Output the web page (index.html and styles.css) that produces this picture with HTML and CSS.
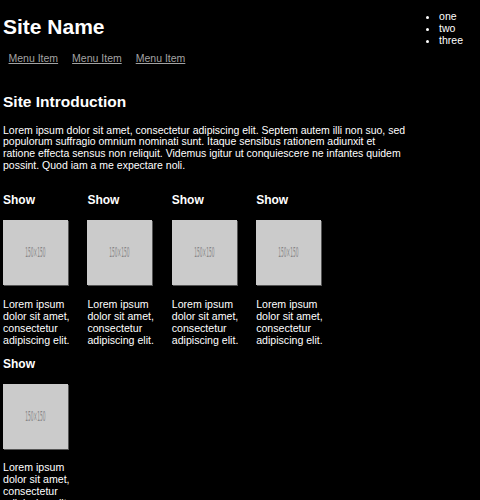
FILE: index.html
```html
<!DOCTYPE html>
<html>
<head>
<meta charset="utf-8">
<link rel="stylesheet" href="styles.css">
</head>
<body>
<header class="header">
  <div class="brand">
    <h1 class="site-name">Site Name</h1>
    <nav class="menu">
      <a href="#" class="menu-item">Menu Item</a>
      <a href="#" class="menu-item">Menu Item</a>
      <a href="#" class="menu-item">Menu Item</a>
    </nav>
  </div>
  <ul class="side-list">
    <li>one</li>
    <li>two</li>
    <li>three</li>
  </ul>
</header>
<main class="main">
  <h2 class="intro-title">Site Introduction</h2>
  <p class="intro-text">Lorem ipsum dolor sit amet, consectetur adipiscing elit. Septem autem illi non suo, sed populorum suffragio omnium nominati sunt. Itaque sensibus rationem adiunxit et ratione effecta sensus non reliquit. Videmus igitur ut conquiescere ne infantes quidem possint. Quod iam a me expectare noli.</p>
  <section class="shows">
    <div class="show">
      <h3 class="show-title">Show</h3>
      <div class="thumb"><span class="thumb-label">150×150</span></div>
      <p class="show-text">Lorem ipsum dolor sit amet, consectetur adipiscing elit.</p>
    </div>
    <div class="show">
      <h3 class="show-title">Show</h3>
      <div class="thumb"><span class="thumb-label">150×150</span></div>
      <p class="show-text">Lorem ipsum dolor sit amet, consectetur adipiscing elit.</p>
    </div>
    <div class="show">
      <h3 class="show-title">Show</h3>
      <div class="thumb"><span class="thumb-label">150×150</span></div>
      <p class="show-text">Lorem ipsum dolor sit amet, consectetur adipiscing elit.</p>
    </div>
    <div class="show">
      <h3 class="show-title">Show</h3>
      <div class="thumb"><span class="thumb-label">150×150</span></div>
      <p class="show-text">Lorem ipsum dolor sit amet, consectetur adipiscing elit.</p>
    </div>
    <div class="show">
      <h3 class="show-title">Show</h3>
      <div class="thumb"><span class="thumb-label">150×150</span></div>
      <p class="show-text">Lorem ipsum dolor sit amet, consectetur adipiscing elit.</p>
    </div>
  </section>
</main>
</body>
</html>
```
FILE: styles.css
```css
html, body {
  background: #000;
}
body {
  margin: 0;
  padding: 0 0 0 3px;
  color: #fff;
  font-family: "Liberation Sans", Arial, sans-serif;
  font-size: 10.5px;
  line-height: 12px;
}
.header {
  display: flex;
  justify-content: space-between;
  align-items: flex-start;
}
.site-name {
  margin: 15px 0 0 0;
  font-size: 21px;
  line-height: 23.5px;
  font-weight: bold;
}
.menu {
  display: flex;
  gap: 14px;
  margin: 14px 0 0 5.5px;
  line-height: 11.7px;
}
.menu-item {
  color: #a3a3a3;
  text-decoration: underline;
}
.side-list {
  margin: 10.4px 17px 0 0;
  padding: 0 0 0 11px;
  list-style: disc;
}
.main {
  display: block;
}
.intro-title {
  margin: 28.5px 0 0 0;
  font-size: 15.5px;
  line-height: 17.3px;
  font-weight: bold;
}
.intro-text {
  margin: 14.5px 0 0 0;
  max-width: 407px;
  line-height: 11.7px;
}
.shows {
  display: grid;
  grid-template-columns: repeat(4, 84.4px);
  row-gap: 12px;
  margin-top: 22.7px;
}
.show-title {
  margin: 0;
  font-size: 12px;
  line-height: 13.4px;
  font-weight: bold;
}
.thumb {
  width: 65px;
  height: 65px;
  margin-top: 12.6px;
  background: #cbcbcb;
  box-shadow: 1px 1px 0 #555;
  display: flex;
  align-items: center;
  justify-content: center;
}
.thumb-label {
  display: inline-block;
  color: #878787;
  font-family: "DejaVu Sans", sans-serif;
  font-size: 13.5px;
  line-height: 13px;
  transform: scaleX(0.32);
  white-space: nowrap;
}
.show-text {
  margin: 12.6px 0 0 0;
  width: 72px;
  font-size: 10.6px;
  line-height: 12px;
}
```
